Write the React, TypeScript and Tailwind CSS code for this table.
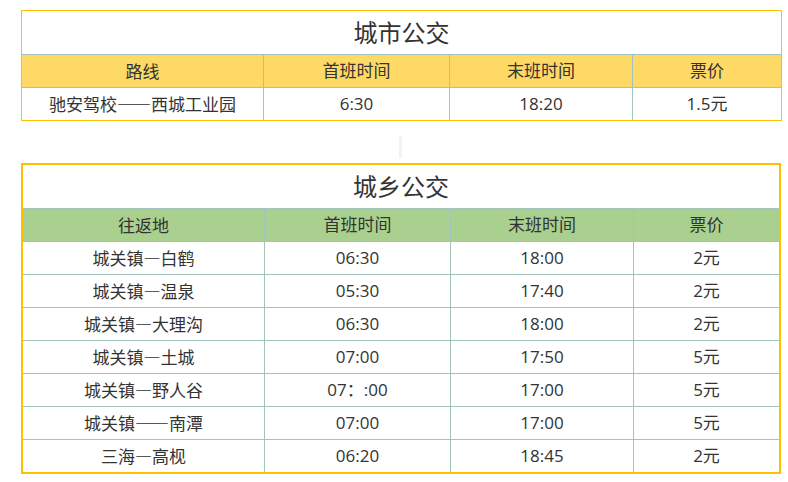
const cityRows = [["驰安驾校——西城工业园", "6:30", "18:20", "1.5元"]];

const townRows = [
  ["城关镇—白鹤", "06:30", "18:00", "2元"],
  ["城关镇—温泉", "05:30", "17:40", "2元"],
  ["城关镇—大理沟", "06:30", "18:00", "2元"],
  ["城关镇—土城", "07:00", "17:50", "5元"],
  ["城关镇—野人谷", "07：:00", "17:00", "5元"],
  ["城关镇——南潭", "07:00", "17:00", "5元"],
  ["三海—高枧", "06:20", "18:45", "2元"],
];

// one row of four cells, teal grid lines between cells
const Row = ({ cells, cols, bg, last }: { cells: string[]; cols: string; bg: string; last?: boolean }) => (
  <div className={`grid ${cols} ${bg} ${last ? "" : "border-b border-[#a3c4bd]"}`}>
    {cells.map((c, i) => (
      <div
        key={i}
        className={`h-[32px] flex items-center justify-center text-[17px] text-[#333] ${i > 0 ? "border-l border-[#a3c4bd]" : ""}`}
        style={i === 0 ? { fontFamily: "'Noto Sans CJK SC', sans-serif", fontFeatureSettings: '"fwid"' } : undefined}
      >
        {c}
      </div>
    ))}
  </div>
);

const App = () => {
  return (
    <div
      className="w-[788px] h-[482px] bg-white pt-[10px] pl-[21px]"
      style={{ fontFamily: "'Open Sans', 'Noto Sans CJK SC', sans-serif" }}
    >
      {/* 城市公交 */}
      <div className="w-[761px] border border-[#ffc000]">
        <div className="h-[44px] flex items-center justify-center text-[24px] text-[#333] border-b border-[#a3c4bd]">
          城市公交
        </div>
        <Row cells={["路线", "首班时间", "末班时间", "票价"]} cols="grid-cols-[241px_186px_183px_1fr]" bg="bg-[#ffd966]" />
        {cityRows.map((r, i) => (
          <Row key={i} cells={r} cols="grid-cols-[241px_186px_183px_1fr]" bg="bg-white" last />
        ))}
      </div>

      <div className="h-[42px] pt-[15px]">
        <div className="ml-[378px] w-[3px] h-[22px] bg-[#f3f3f3]" />
      </div>

      {/* 城乡公交 */}
      <div className="w-[760px] border-2 border-[#ffc000]">
        <div className="h-[44px] flex items-center justify-center text-[24px] text-[#333] border-b border-[#a3c4bd]">
          城乡公交
        </div>
        <Row cells={["往返地", "首班时间", "末班时间", "票价"]} cols="grid-cols-[241px_186px_183px_1fr]" bg="bg-[#a9d08e]" />
        {townRows.map((r, i) => (
          <Row
            key={i}
            cells={r}
            cols="grid-cols-[241px_186px_183px_1fr]"
            bg="bg-white"
            last={i === townRows.length - 1}
          />
        ))}
      </div>
    </div>
  );
};

export default App;
